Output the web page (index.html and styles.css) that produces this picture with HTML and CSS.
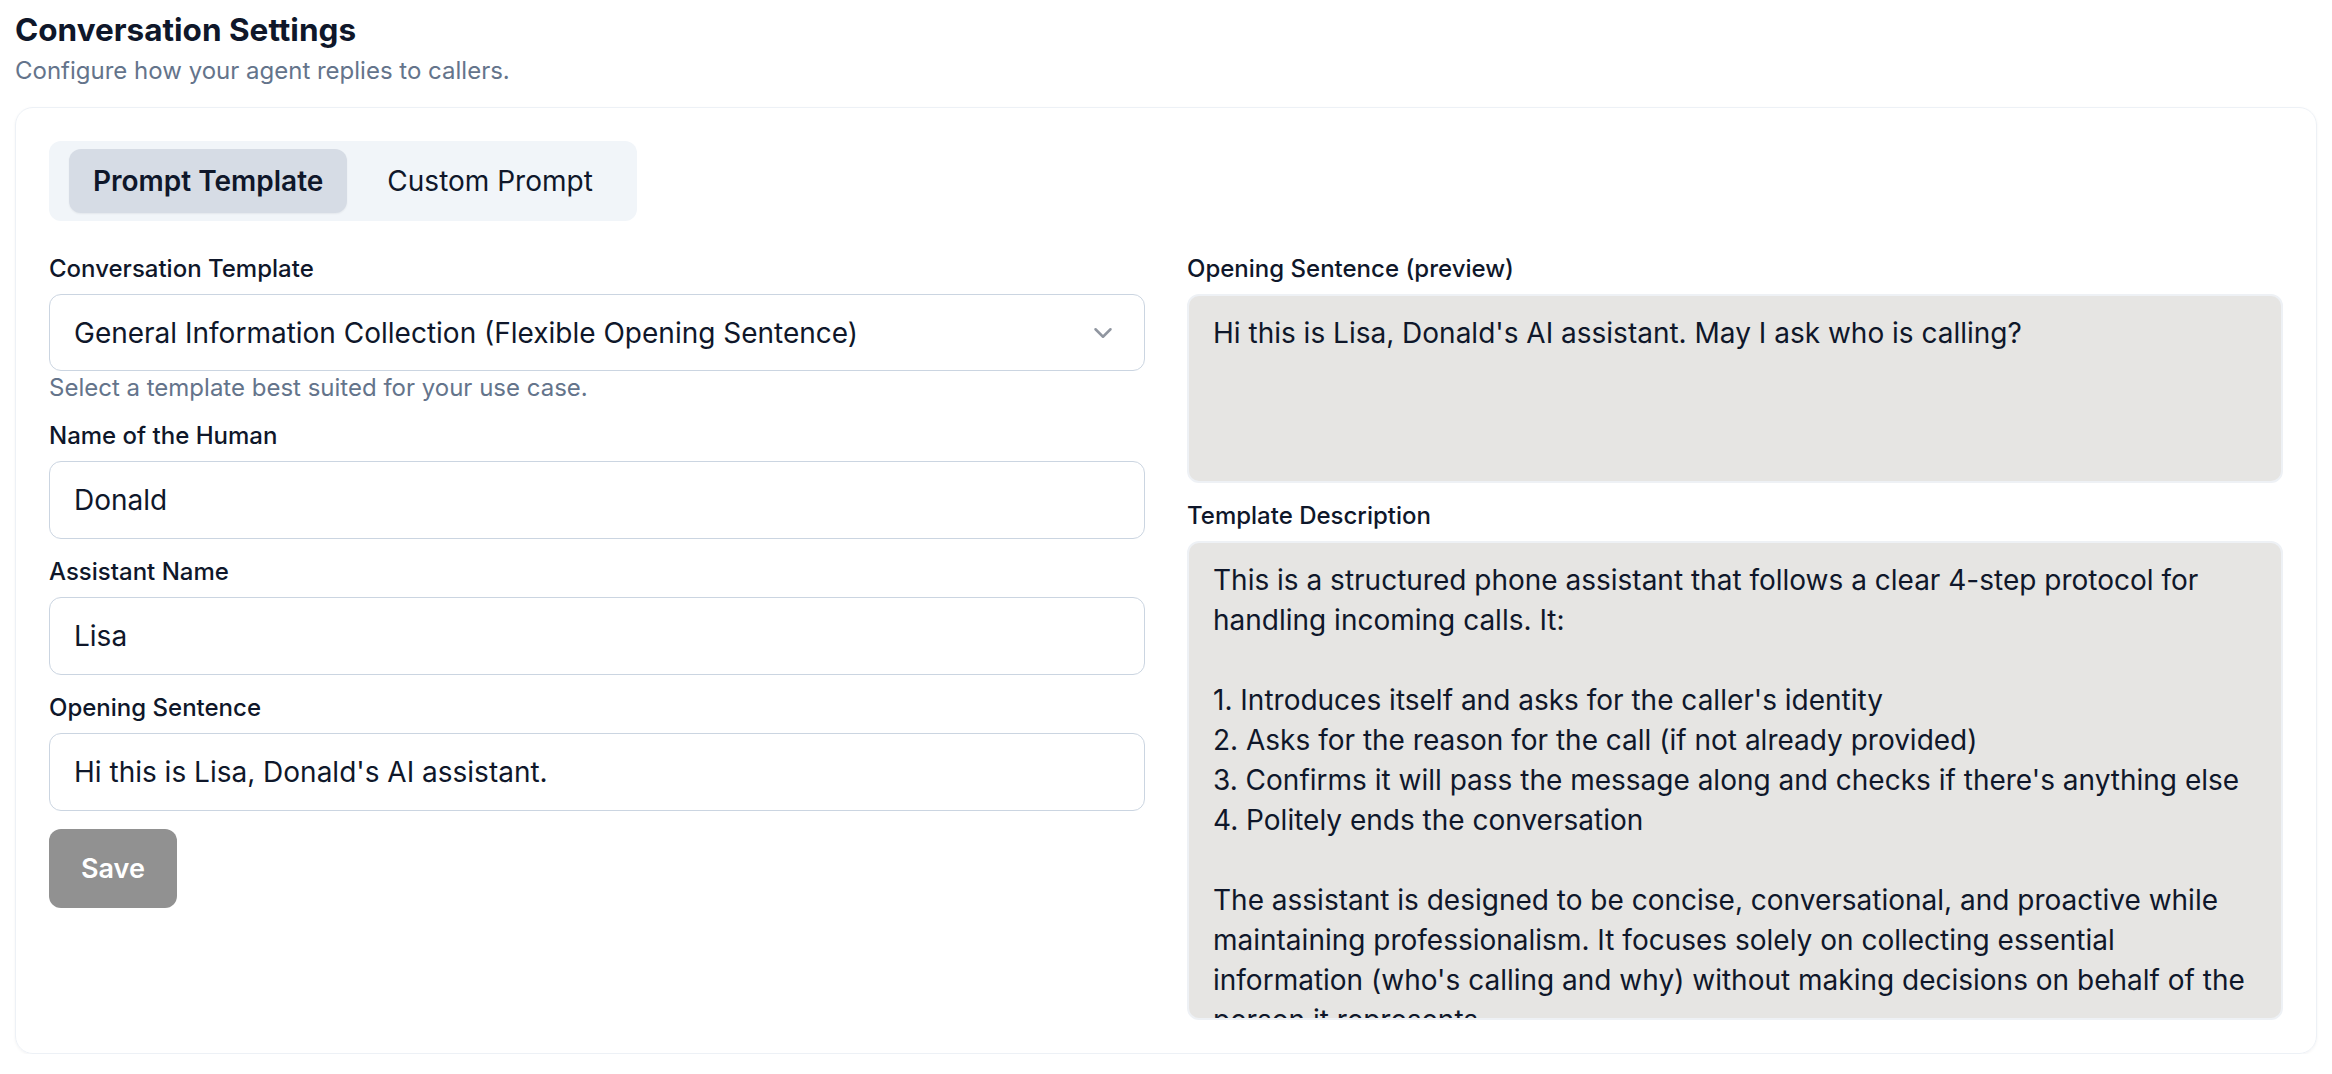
FILE: index.html
```html
<!DOCTYPE html>
<html lang="en">
<head>
    <meta charset="UTF-8">
    <meta name="viewport" content="width=device-width, initial-scale=1.0">
    <title>Conversation Settings</title>
    <link rel="stylesheet" href="styles.css">
</head>
<body>
<h1 class="page-title">Conversation Settings</h1>
<p class="page-subtitle">Configure how your agent replies to callers.</p>

<div class="settings-card">
    <div class="tab-list">
        <button class="tab tab-active">Prompt Template</button>
        <button class="tab">Custom Prompt</button>
    </div>

    <div class="settings-grid">
        <div class="form-column">
            <div class="field">
                <label class="field-label">Conversation Template</label>
                <div class="select-box">
                    <span>General Information Collection (Flexible Opening Sentence)</span>
                    <svg class="chevron" viewBox="0 0 24 24" fill="none" stroke="currentColor" stroke-width="2" stroke-linecap="round" stroke-linejoin="round"><path d="m6 9 6 6 6-6"/></svg>
                </div>
                <p class="field-hint">Select a template best suited for your use case.</p>
            </div>

            <div class="field">
                <label class="field-label" for="humanName">Name of the Human</label>
                <input id="humanName" class="form-input" type="text" value="Donald">
            </div>

            <div class="field">
                <label class="field-label" for="assistantName">Assistant Name</label>
                <input id="assistantName" class="form-input" type="text" value="Lisa">
            </div>

            <div class="field">
                <label class="field-label" for="openingSentence">Opening Sentence</label>
                <input id="openingSentence" class="form-input" type="text" value="Hi this is Lisa, Donald's AI assistant.">
            </div>

            <div>
                <button class="save-button">Save</button>
            </div>
        </div>

        <div class="form-column">
            <div class="field">
                <label class="field-label">Opening Sentence (preview)</label>
                <div class="readonly-box preview-box">Hi this is Lisa, Donald's AI assistant. May I ask who is calling?</div>
            </div>

            <div class="field">
                <label class="field-label">Template Description</label>
                <div class="readonly-box description-box">This is a structured phone assistant that follows a clear 4-step protocol for handling incoming calls. It:

1. Introduces itself and asks for the caller's identity
2. Asks for the reason for the call (if not already provided)
3. Confirms it will pass the message along and checks if there's anything else
4. Politely ends the conversation

The assistant is designed to be concise, conversational, and proactive while maintaining professionalism. It focuses solely on collecting essential information (who's calling and why) without making decisions on behalf of the person it represents.</div>
            </div>
        </div>
    </div>
</div>
</body>
</html>
```

FILE: styles.css
```css
body {
    margin: 0;
    padding: 9px 15px 0;
    background-color: #ffffff;
    font-family: Inter, "Noto Sans", sans-serif;
    color: #0f172a;
}

.page-title {
    margin: 0;
    font-size: 31.5px;
    line-height: 42px;
    font-weight: 700;
}

.page-subtitle {
    margin: 5px 0 0;
    font-size: 24px;
    line-height: 30px;
    color: #64748b;
}

.settings-card {
    margin-top: 21px;
    padding: 33px;
    border: 1px solid #edf1f6;
    border-radius: 18px;
    box-shadow: 0 1px 3px rgba(15, 23, 42, 0.05);
}

.tab-list {
    display: inline-flex;
    gap: 16px;
    padding: 8px 20px;
    background-color: #f1f5f9;
    border-radius: 12px;
}

.tab {
    height: 64px;
    padding: 0 24px;
    border: none;
    border-radius: 12px;
    background: transparent;
    font-family: inherit;
    font-size: 28px;
    font-weight: 400;
    color: #0f172a;
}

.tab-active {
    background-color: #d6dce5;
    font-weight: 600;
    box-shadow: 0 1px 2px rgba(15, 23, 42, 0.06);
}

.settings-grid {
    display: grid;
    grid-template-columns: 1fr 1fr;
    column-gap: 42px;
    margin-top: 33px;
}

.form-column {
    display: flex;
    flex-direction: column;
    gap: 18px;
}

.field {
    display: flex;
    flex-direction: column;
}

.field-label {
    font-size: 24px;
    line-height: 30px;
    font-weight: 500;
    margin-bottom: 10px;
}

.select-box, .form-input {
    height: 78px;
    box-sizing: border-box;
    border: 1.5px solid #cbd5e1;
    border-radius: 12px;
    background: #ffffff;
    padding: 0 24px 0 24px;
    font-family: inherit;
    font-size: 28px;
    color: #0f172a;
}

.select-box {
    display: flex;
    align-items: center;
    justify-content: space-between;
    height: 77px;
}

.chevron {
    width: 30px;
    height: 30px;
    color: #9096a0;
    margin-right: 2px;
}

.form-input {
    width: 100%;
    outline: none;
}

.field-hint {
    margin: 2px 0 0;
    font-size: 24px;
    line-height: 30px;
    color: #64748b;
}

.save-button {
    height: 79px;
    padding: 0 32px;
    border: none;
    border-radius: 12px;
    background-color: #919191;
    color: #ffffff;
    font-family: inherit;
    font-size: 27px;
    font-weight: 600;
}

.readonly-box {
    box-sizing: border-box;
    padding: 17px 24px;
    border: 2px solid #eef1f5;
    border-radius: 12px;
    background-color: #e6e5e3;
    font-size: 28px;
    line-height: 40px;
    color: #0f172a;
    white-space: pre-wrap;
    overflow: hidden;
}

.preview-box {
    height: 189px;
}

.description-box {
    height: 479px;
}
```
